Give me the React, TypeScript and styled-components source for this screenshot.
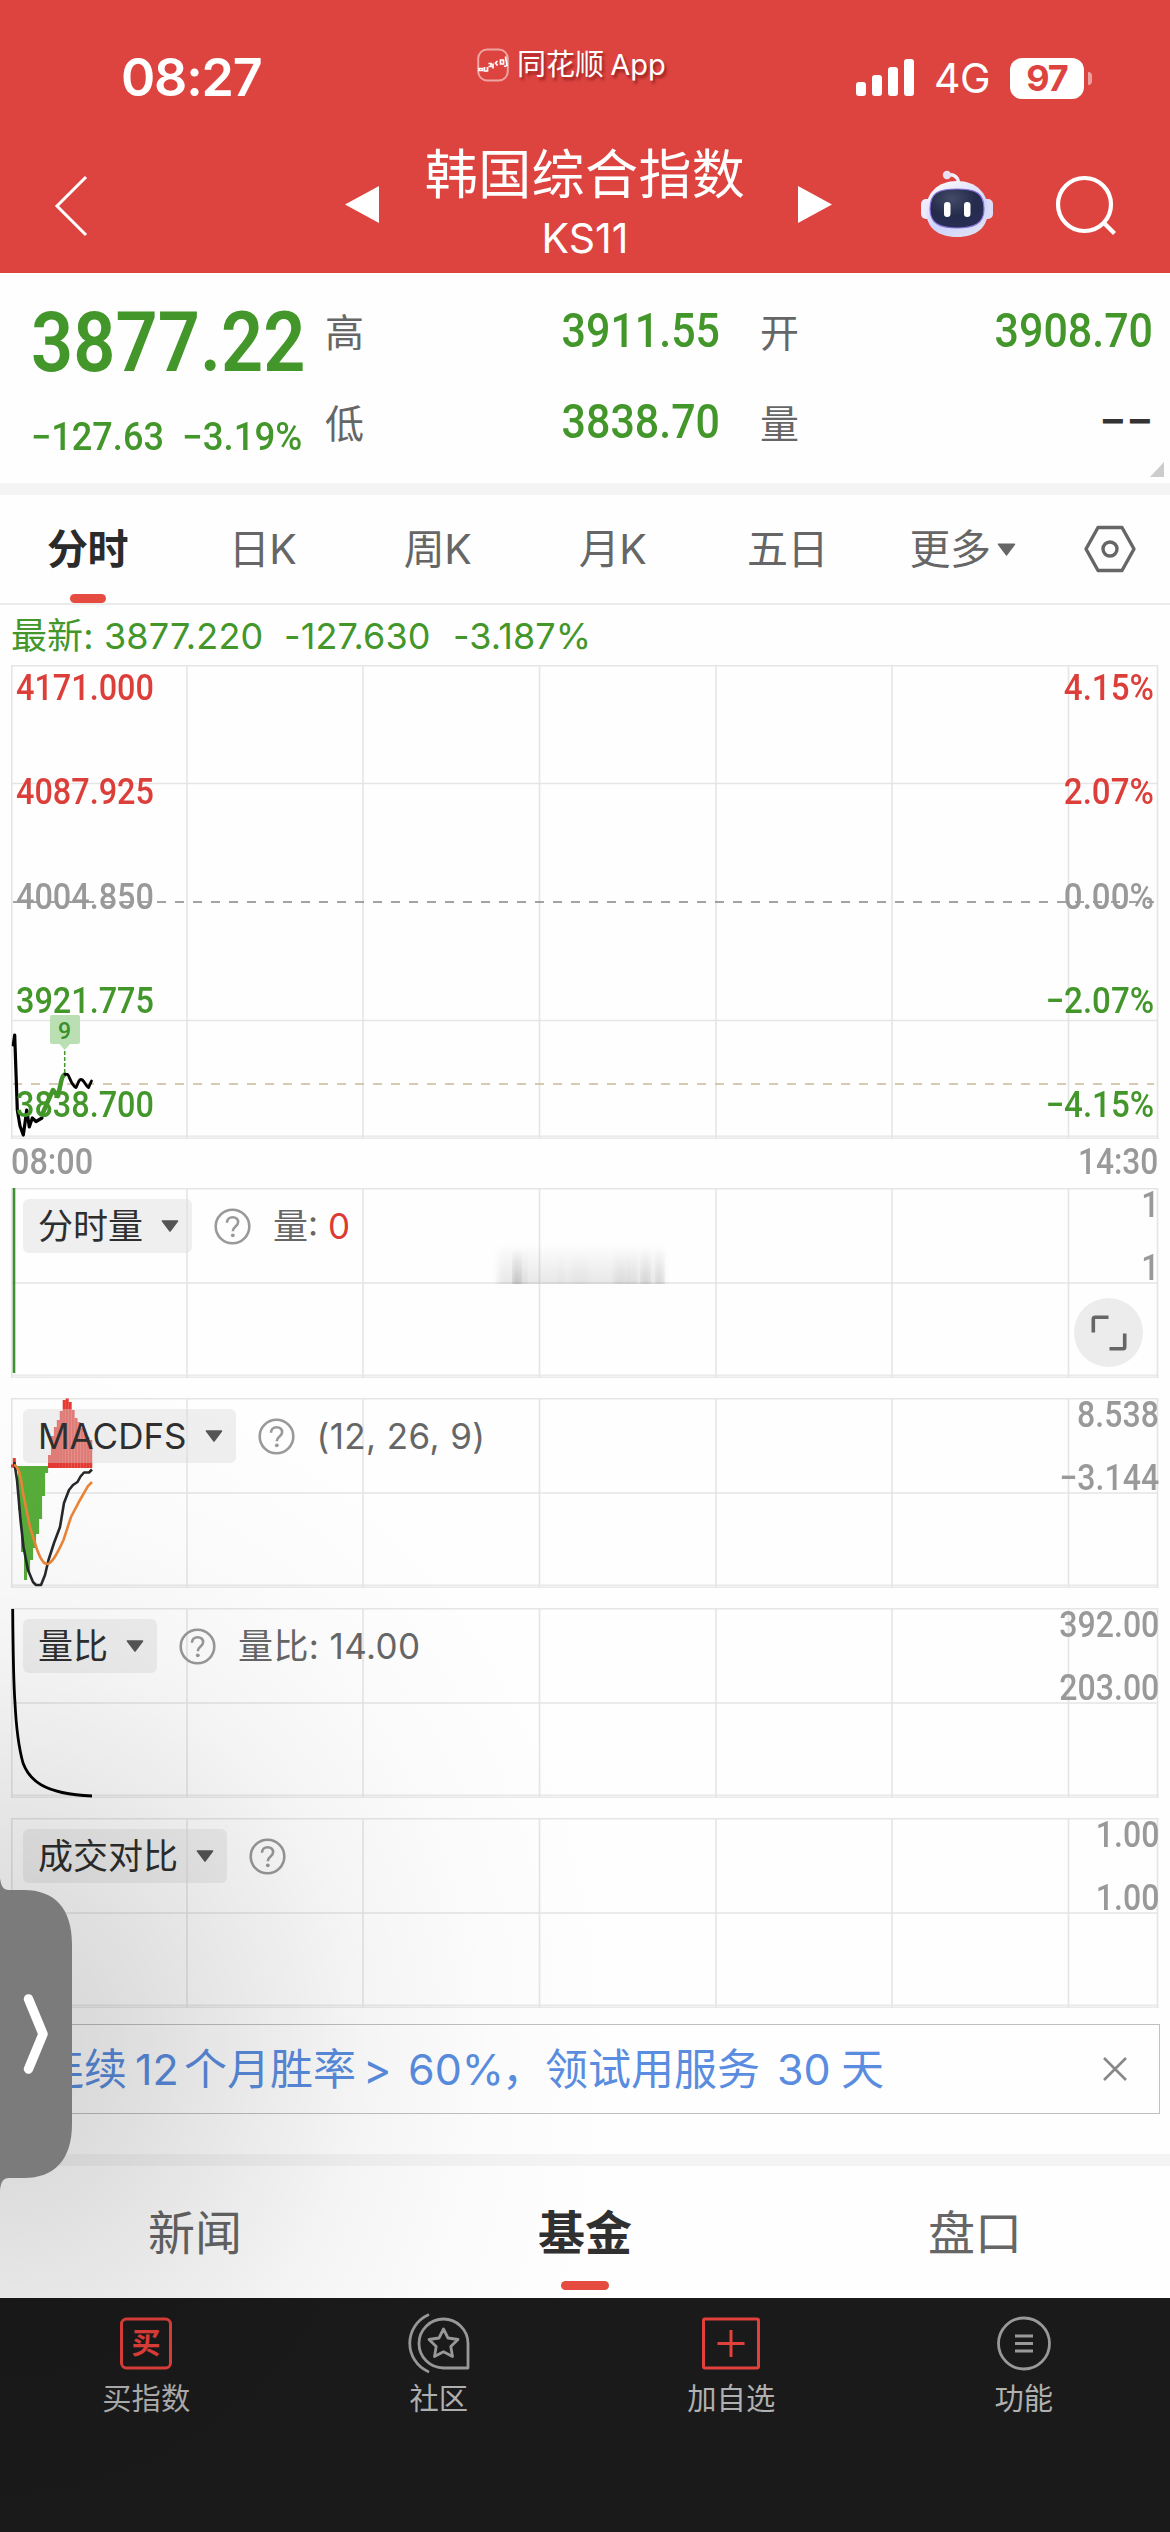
import React from 'react';
import styled, { createGlobalStyle } from 'styled-components';

const RED = '#dd4440';
const GREEN = '#43962a';
const GRID = '#e5e5e5';
const COLUMNS = [187, 363, 539.5, 716, 892, 1068.5];

const GlobalStyle = createGlobalStyle`
  * { box-sizing: border-box; }
  body {
    margin: 0;
    background: #fff;
    font-family: Inter, 'Noto Sans CJK SC', sans-serif;
  }
`;

const Page = styled.div`
  position: relative;
  width: 1170px;
  height: 2532px;
  display: flex;
  flex-direction: column;
  overflow: hidden;
  background: #fefefe;
  white-space: nowrap;
`;

const Num = styled.span<{ $size: number; $scale?: number; $origin?: string; $color?: string; $weight?: number }>`
  display: inline-block;
  font-family: Roboto, sans-serif;
  font-weight: ${(p) => p.$weight ?? 500};
  font-size: ${(p) => p.$size}px;
  color: ${(p) => p.$color ?? GREEN};
  transform: scaleX(${(p) => p.$scale ?? 1});
  transform-origin: ${(p) => p.$origin ?? 'left'} center;
`;

/* ---------- header ---------- */

const Header = styled.header`
  height: 273px;
  flex: none;
  background: ${RED};
  color: #fff;
`;

const StatusBar = styled.div`
  height: 136px;
  display: grid;
  grid-template-columns: 477px 379px 1fr;
`;

const Clock = styled.div`
  padding: 48px 0 0 121px;
  font-size: 52px;
  font-weight: 600;
  line-height: 60px;
  letter-spacing: -1.2px;
`;

const AppMark = styled.div`
  display: flex;
  align-items: center;
  gap: 8px;
  height: 36px;
  margin-top: 47px;
  font-size: 29px;
  line-height: 36px;
  word-spacing: -2px;
  text-shadow: 2px 3px 3px rgba(90, 0, 0, 0.55);
`;

const Signals = styled.div`
  display: flex;
  align-items: center;
  height: 42px;
  margin-top: 57px;
`;

const Network = styled.span`
  margin-left: 19px;
  width: 76px;
  font-size: 41px;
  line-height: 42px;
  letter-spacing: -0.5px;
`;

const Battery = styled.span`
  width: 74px;
  height: 41px;
  border-radius: 12px;
  background: #fff;
  color: ${RED};
  font-size: 36px;
  font-weight: 700;
  line-height: 41px;
  text-align: center;
  letter-spacing: -1px;
`;

const BatteryTip = styled.span`
  width: 4px;
  height: 13px;
  margin-left: 4px;
  border-radius: 0 5px 5px 0;
  background: #eca09e;
`;

const NavBar = styled.div`
  height: 137px;
  display: grid;
  grid-template-columns: 345px 34px 419px 34px 89px 72px 1fr;
  & > svg { display: block; }
`;

const TitleBlock = styled.div`
  padding-right: 7px;
  text-align: center;
`;

const Title = styled.div`
  margin-top: 9px;
  font-size: 53px;
  line-height: 60px;
  letter-spacing: 0.4px;
`;

const Ticker = styled.div`
  margin-top: 12px;
  font-size: 41px;
  line-height: 42px;
  letter-spacing: 0;
`;

/* ---------- quote ---------- */

const Quote = styled.section`
  position: relative;
  flex: none;
  height: 210px;
  display: flex;
  padding-left: 31px;
`;

const PriceBlock = styled.div`
  width: 294px;
  padding-top: 27px;
`;

const Price = styled.div`
  height: 84px;
  line-height: 86px;
`;

const Changes = styled.div`
  display: grid;
  grid-template-columns: 151px 1fr;
  margin-top: 33px;
  line-height: 41px;
`;

const Stats = styled.div`
  display: grid;
  grid-template-columns: 395px 393px;
  grid-auto-rows: 91px;
  column-gap: 40px;
  padding-top: 14px;
`;

const Stat = styled.div`
  display: flex;
  align-items: center;
  justify-content: space-between;
  font-size: 39px;
  color: #666;
  line-height: 90px;
  & > span { line-height: 86px; padding-bottom: 4px; }
`;

const Corner = styled.i`
  position: absolute;
  right: 6px;
  bottom: 6px;
  border-style: solid;
  border-width: 0 0 15px 14px;
  border-color: transparent transparent #ccc transparent;
`;

const Band = styled.div`
  height: 12px;
  flex: none;
  background: #f4f4f4;
`;

/* ---------- period tabs ---------- */

const PeriodTabs = styled.nav`
  flex: none;
  height: 110px;
  display: grid;
  grid-template-columns: repeat(6, 175px) 120px;
  border-bottom: 2px solid #ebebeb;
`;

const PeriodTab = styled.div<{ $active?: boolean }>`
  display: flex;
  align-items: center;
  justify-content: center;
  gap: 6px;
  position: relative;
  font-size: 41px;
  line-height: 108px;
  letter-spacing: -0.5px;
  color: ${(p) => (p.$active ? '#2b2b2b' : '#666')};
  font-weight: ${(p) => (p.$active ? 700 : 400)};
`;

const Indicator = styled.i<{ $width: number; $bottom: number }>`
  position: absolute;
  left: 50%;
  bottom: ${(p) => p.$bottom}px;
  width: ${(p) => p.$width}px;
  height: 9px;
  margin-left: ${(p) => -p.$width / 2}px;
  border-radius: 5px;
  background: #e64b40;
`;

const Latest = styled.div`
  flex: none;
  height: 60px;
  display: grid;
  grid-template-columns: 93px 180px 169px 1fr;
  padding-left: 11px;
  line-height: 62px;
  font-size: 36px;
  letter-spacing: 0.1px;
  color: ${GREEN};
`;

/* ---------- charts ---------- */

const ChartStack = styled.section`
  flex: none;
  height: 1359px;
`;

const Panel = styled.div<{ $height: number; $gap?: number }>`
  display: grid;
  height: ${(p) => p.$height}px;
  margin-bottom: ${(p) => p.$gap ?? 0}px;
  & > * { grid-area: 1 / 1; }
  & > svg { display: block; }
`;

const Scale = styled.div<{ $right?: boolean; $pad: number; $gap: number; $edge: number; $line: number }>`
  display: flex;
  flex-direction: column;
  justify-self: ${(p) => (p.$right ? 'end' : 'start')};
  align-items: ${(p) => (p.$right ? 'flex-end' : 'flex-start')};
  gap: ${(p) => p.$gap}px;
  padding: ${(p) => p.$pad}px ${(p) => p.$edge}px 0;
  line-height: ${(p) => p.$line}px;
`;

const TimeRow = styled.div`
  display: flex;
  justify-content: space-between;
  height: 49px;
  padding: 0 12px 0 11px;
  line-height: 47px;
`;

const Legend = styled.div`
  display: flex;
  align-items: center;
  align-self: start;
  justify-self: start;
  gap: 22px;
  height: 54px;
  margin: 11px 0 0 23px;
  font-size: 35px;
  line-height: 54px;
  color: #666;
`;

const Chip = styled.div`
  display: flex;
  align-items: center;
  gap: 18px;
  height: 54px;
  padding: 0 13px 0 15px;
  border-radius: 6px;
  background: rgba(220, 220, 220, 0.42);
  color: #2e2e2e;
`;

const Reading = styled.span`
  letter-spacing: 0.4px;
`;

const RedValue = styled.span`
  color: #dc3b35;
`;

const ExpandButton = styled.div`
  align-self: end;
  justify-self: end;
  display: grid;
  place-items: center;
  width: 69px;
  height: 69px;
  margin: 0 27px 11px 0;
  border-radius: 50%;
  background: #ececec;
`;

/* ---------- promotion and lower tabs ---------- */

const Promo = styled.div`
  flex: none;
  display: flex;
  align-items: center;
  justify-content: space-between;
  height: 90px;
  margin: 0 10px 40px 12px;
  padding: 0 32px 0 28px;
  border: 1px solid #c0c0c0;
  font-size: 43px;
  line-height: 88px;
  color: #5a8ddf;
`;

const PromoText = styled.span`
  display: flex;
`;

const Piece = styled.span<{ $width: number }>`
  width: ${(p) => p.$width}px;
`;

const SectionTabs = styled.nav`
  flex: none;
  height: 132px;
  display: grid;
  grid-template-columns: repeat(3, 1fr);
`;

const SectionTab = styled.div<{ $active?: boolean }>`
  position: relative;
  text-align: center;
  font-size: 47px;
  line-height: 133px;
  color: ${(p) => (p.$active ? '#303030' : '#666')};
  font-weight: ${(p) => (p.$active ? 700 : 400)};
`;

const Toolbar = styled.footer`
  flex: none;
  height: 234px;
  display: grid;
  grid-template-columns: repeat(4, 1fr);
  background: #1a1a1a;
`;

const Tool = styled.div`
  display: flex;
  flex-direction: column;
  align-items: center;
  padding-top: 15px;
  font-size: 29.3px;
  line-height: 40px;
  color: #b0b0b0;
  & > svg { margin-bottom: 2px; }
`;

const DrawerShade = styled.div`
  position: absolute;
  left: 0;
  top: 1330px;
  width: 640px;
  height: 1202px;
  pointer-events: none;
  background: radial-gradient(
    ellipse 620px 700px at 0 720px,
    rgba(0, 0, 0, 0.16) 0%,
    rgba(0, 0, 0, 0.135) 18%,
    rgba(0, 0, 0, 0.085) 38%,
    rgba(0, 0, 0, 0.035) 60%,
    rgba(0, 0, 0, 0.01) 80%,
    rgba(0, 0, 0, 0) 100%
  );
`;

const DrawerHandle = styled.div`
  position: absolute;
  left: 0;
  top: 1872px;
  width: 72px;
  height: 324px;
`;

/* ---------- drawings ---------- */

const DownTriangle = ({ w = 18, h = 12, color = '#555' }: { w?: number; h?: number; color?: string }) => (
  <svg width={w} height={h} viewBox="0 0 18 12">
    <path d="M1.5 1h15L9 11z" fill={color} stroke={color} strokeWidth="1.6" strokeLinejoin="round" />
  </svg>
);

const Help = () => (
  <svg width="37" height="37" viewBox="0 0 37 37" fill="none" stroke="#999">
    <circle cx="18.5" cy="18.5" r="16.8" strokeWidth="2.6" />
    <path d="M13 14.8c0-3.4 2.4-5.6 5.6-5.6s5.5 2 5.5 5c0 4.4-5.3 4.3-5.3 9" strokeWidth="2.6" />
    <circle cx="18.8" cy="27.3" r="1.9" fill="#999" stroke="none" />
  </svg>
);

const AppGlyph = () => (
  <svg width="32" height="34" viewBox="0 0 32 34" fill="none" stroke="#fff">
    <rect x="1.2" y="1.5" width="29.6" height="31" rx="9" stroke="#eea5a2" strokeWidth="2" />
    <path d="M2 20.5h3.5v2H2zM7.500 19v4h3v-4M11.500 15.500h2.500v3h-2.500M16 15.500v5M20.500 13l-2 2 2 2.500M23.500 12h3v4h-3zM28.500 8.500l1.500 9-3 1" strokeWidth="1.7" />
  </svg>
);

const SignalBars = () => (
  <svg width="59" height="42" viewBox="0 0 59 42" fill="#fff">
    <rect x="0" y="25" width="10" height="14" rx="3" />
    <rect x="16" y="18" width="10" height="21" rx="3" />
    <rect x="32" y="10" width="10" height="29" rx="3" />
    <rect x="48" y="2" width="10" height="37" rx="3" />
  </svg>
);

const Robot = () => (
  <svg width="72" height="137" viewBox="0 0 72 137">
    <defs>
      <linearGradient id="shell" x1="0.2" y1="0" x2="0.8" y2="1">
        <stop offset="0" stopColor="#fbfaff" />
        <stop offset="0.6" stopColor="#cfd3fb" />
        <stop offset="1" stopColor="#dfe4f6" />
      </linearGradient>
      <radialGradient id="visor" cx="0.4" cy="0.25" r="0.9">
        <stop offset="0" stopColor="#444b68" />
        <stop offset="0.5" stopColor="#242b4b" />
        <stop offset="1" stopColor="#2c2f5c" />
      </radialGradient>
    </defs>
    <path d="M26 39c6-1 11 1 11.500 8" fill="none" stroke="#f5eefb" strokeWidth="3.4" />
    <circle cx="26" cy="39" r="4.200" fill="#e9e0f4" />
    <rect x="0" y="63" width="12" height="20" rx="5" fill="#eeecfc" />
    <rect x="60" y="63" width="12" height="20" rx="5" fill="#dcdcf8" />
    <path d="M36 45c19 0 31 12 31 29 0 18-12 27-31 27S5 92 5 74c0-17 12-29 31-29z" fill="url(#shell)" />
    <path d="M36 53c19 0 27 4 27 20 0 14-9 19-27 19S9 87 9 73c0-16 8-20 27-20z" fill="url(#visor)" stroke="#8873d8" strokeWidth="1.200" />
    <rect x="23" y="66" width="6.500" height="15" rx="3.200" fill="#fff" />
    <rect x="43" y="66" width="6.500" height="15" rx="3.200" fill="#fff" />
  </svg>
);

const Grid = ({ height, rows }: { height: number; rows: number[] }) => (
  <g stroke={GRID} strokeWidth="1.6" fill="none">
    <path d={`M11 0.800H1158.500M11.800 0V${height}M1157.500 0V${height}`} />
    <path d={`M11 ${height - 0.800}H1158.500M11 ${height - 2.800}H1158.500`} strokeWidth="1.200" />
    {COLUMNS.map((x) => (
      <path key={x} d={`M${x} 0V${height}`} />
    ))}
    {rows.map((y) => (
      <path key={y} d={`M11 ${y}H1158`} />
    ))}
  </g>
);

const PriceChart = () => (
  <svg width="1170" height="474" viewBox="0 0 1170 474" fill="none">
    <Grid height={474} rows={[118.500, 355.500]} />
    <path d="M13 237H1154" stroke="#858585" strokeWidth="1.500" strokeDasharray="9 9" />
    <path d="M13 419H1154" stroke="#c9b99b" strokeWidth="1.500" strokeDasharray="9 9" />
    <path d="M13.300 380L14.700 370L16 408L17.300 445L20 461L23.300 470L25 458L26.700 445L29.300 462L32.300 453L36 456.500L42 453" stroke="#000" strokeWidth="3.200" strokeLinejoin="round" strokeLinecap="round" />
    <path d="M42 450L48 436L53 425L58 431L61.500 415C62.500 411 63.500 409.500 66 409.300" stroke={GREEN} strokeWidth="4.500" strokeLinejoin="round" />
    <path d="M65 409.300H67.500C69.500 411 71 420 76 422.600C78 419 78.500 414.500 81 414.500C84 414.500 85 420 88.500 422.600L91.500 416" stroke="#000" strokeWidth="2.800" strokeLinejoin="round" strokeLinecap="round" />
    <path d="M64.700 386V408" stroke={GREEN} strokeWidth="1.500" strokeDasharray="4 2" />
    <path d="M52 350H78a2 2 0 0 1 2 2V377a2 2 0 0 1-2 2H70L64.700 385L59.500 379H52a2 2 0 0 1-2-2V352a2 2 0 0 1 2-2z" fill="#b9dfb3" />
    <text x="64.500" y="374" fontFamily="Roboto" fontSize="23" fontWeight="500" fill="#398f2b" textAnchor="middle">9</text>
  </svg>
);

const smudges = [
  [513, 8, 0.42], [521, 6, 0.14], [558, 6, 0.06], [572, 16, 0.05], [614, 14, 0.13], [628, 9, 0.12], [641, 9, 0.22], [656, 8, 0.2],
];

const VolumeChart = () => (
  <svg width="1170" height="190" viewBox="0 0 1170 190">
    <defs>
      <linearGradient id="fade" x1="0" y1="0" x2="0" y2="1">
        <stop offset="0" stopColor="#777" stopOpacity="0" />
        <stop offset="1" stopColor="#777" stopOpacity="1" />
      </linearGradient>
      <filter id="soft"><feGaussianBlur stdDeviation="3 0.500" /></filter>
      <clipPath id="upper"><rect x="490" y="50" width="190" height="46" /></clipPath>
    </defs>
    <Grid height={190} rows={[95]} />
    <path d="M14 0V185" stroke="#3d9130" strokeWidth="2.600" />
    <g clipPath="url(#upper)">
      <rect x="498" y="56" width="166" height="40" fill="url(#fade)" opacity="0.17" filter="url(#soft)" />
      {smudges.map(([x, w, o]) => (
        <rect key={x} x={x} y="60" width={w} height="38" fill="url(#fade)" opacity={o} filter="url(#soft)" />
      ))}
    </g>
  </svg>
);

const fallBars = [14, 112, 154, 182, 174, 162, 150, 136, 121, 98, 75];
const riseBars = [57, 38, 29, 22, 13, 2, 0.5, 4, 12, 20, 24, 30, 36, 39, 42];

const MacdChart = () => (
  <svg width="1170" height="190" viewBox="0 0 1170 190" fill="none">
    <Grid height={190} rows={[95]} />
    {fallBars.map((bottom, i) => (
      <rect key={i} x={15 + i * 3} y="68" width="3.100" height={Math.max(2, bottom - 68)} fill="#57ad3a" />
    ))}
    {riseBars.map((top, i) => (
      <rect key={i} x={48 + i * 2.940} y={top} width="3.100" height={70 - top} fill="#e53a32" />
    ))}
    <path d="M11 68H15M14.300 60V70" stroke="#e53a32" strokeWidth="3" />
    <path d="M14.300 64L17 82L20.500 122L23.500 149L28 172L33 184L36 187H41L45 177L48.500 162L54 145L60 129L64 105L69 92L73 87L77.500 84L80.500 78.500L84 74.500H89L92 71.500" stroke="#26282c" strokeWidth="2.600" strokeLinejoin="round" />
    <path d="M14 67C20 69 21 82 23 95L30 129L35.500 147C40 161 44 166 47 166C52 166 58 154 63.500 142L71 119L80 102L88 88L92 84" stroke="#ec8536" strokeWidth="2.600" />
  </svg>
);

const RatioChart = () => (
  <svg width="1170" height="190" viewBox="0 0 1170 190" fill="none">
    <Grid height={190} rows={[95]} />
    <path d="M12.700 1C13 40 13.500 75 15 95C16 115 18 137 23 155C29 171 42 186 92 188" stroke="#000" strokeWidth="2.800" />
  </svg>
);

const CompareChart = () => (
  <svg width="1170" height="190" viewBox="0 0 1170 190" fill="none">
    <Grid height={190} rows={[95]} />
  </svg>
);

const SubScale = ({ values }: { values: string[] }) => (
  <Scale $right $pad={0} $gap={29} $edge={11} $line={34}>
    {values.map((v, i) => (
      <Num key={i} $size={36} $scale={0.89} $origin="right" $color="#999">{v}</Num>
    ))}
  </Scale>
);

const priceScale: [string, string, string][] = [
  ['4171.000', '4.15%', '#dc3f3a'],
  ['4087.925', '2.07%', '#dc3f3a'],
  ['4004.850', '0.00%', '#999'],
  ['3921.775', '−2.07%', GREEN],
  ['3838.700', '−4.15%', GREEN],
];

export default function App() {
  return (
    <Page>
      <GlobalStyle />
      <Header>
        <StatusBar>
          <Clock>08:27</Clock>
          <AppMark><AppGlyph />同花顺 App</AppMark>
          <Signals>
            <SignalBars />
            <Network>4G</Network>
            <Battery>97</Battery>
            <BatteryTip />
          </Signals>
        </StatusBar>
        <NavBar>
          <svg width="345" height="137" viewBox="0 0 345 137" fill="none">
            <path d="M86 41L57 70L86 99" stroke="#fff" strokeWidth="3" />
          </svg>
          <svg width="34" height="137" viewBox="0 0 34 137"><path d="M34 50V87L0 68.500z" fill="#fff" /></svg>
          <TitleBlock>
            <Title>韩国综合指数</Title>
            <Ticker>KS11</Ticker>
          </TitleBlock>
          <svg width="34" height="137" viewBox="0 0 34 137"><path d="M0 50V87L34 68.500z" fill="#fff" /></svg>
          <span />
          <Robot />
          <svg width="177" height="137" viewBox="0 0 177 137" fill="none" stroke="#fff" strokeWidth="4.200">
            <circle cx="91.500" cy="68.500" r="26.500" />
            <path d="M111 87L121.500 97.500" />
          </svg>
        </NavBar>
      </Header>

      <Quote>
        <PriceBlock>
          <Price><Num $size={84} $scale={0.88} $weight={600}>3877.22</Num></Price>
          <Changes>
            <Num $size={38} $scale={0.95}>−127.63</Num>
            <Num $size={38} $scale={0.965}>−3.19%</Num>
          </Changes>
        </PriceBlock>
        <Stats>
          <Stat>高<Num $size={48} $scale={0.895} $origin="right">3911.55</Num></Stat>
          <Stat>开<Num $size={48} $scale={0.895} $origin="right">3908.70</Num></Stat>
          <Stat>低<Num $size={48} $scale={0.895} $origin="right">3838.70</Num></Stat>
          <Stat>量<Num $size={48} $scale={1} $origin="right" $color="#333">−−</Num></Stat>
        </Stats>
        <Corner />
      </Quote>
      <Band />

      <PeriodTabs>
        <PeriodTab $active>分时<Indicator $width={36} $bottom={0} /></PeriodTab>
        <PeriodTab>日K</PeriodTab>
        <PeriodTab>周K</PeriodTab>
        <PeriodTab>月K</PeriodTab>
        <PeriodTab>五日</PeriodTab>
        <PeriodTab>更多<DownTriangle w={19} h={13} color="#666" /></PeriodTab>
        <PeriodTab>
          <svg width="54" height="50" viewBox="0 0 54 50" fill="none" stroke="#666" strokeWidth="3.400">
            <path d="M15 3.500H39L51 25L39 46.500H15L3 25z" strokeLinejoin="round" />
            <circle cx="27" cy="25" r="7" />
          </svg>
        </PeriodTab>
      </PeriodTabs>

      <Latest>
        <span>最新:</span><span>3877.220</span><span>-127.630</span><span>-3.187%</span>
      </Latest>

      <ChartStack>
        <Panel $height={474}>
          <PriceChart />
          <Scale $pad={3} $gap={64.3} $edge={16} $line={40}>
            {priceScale.map(([v, , c]) => <Num key={v} $size={36} $scale={0.9} $color={c}>{v}</Num>)}
          </Scale>
          <Scale $right $pad={3} $gap={64.3} $edge={16} $line={40}>
            {priceScale.map(([, v, c]) => <Num key={v} $size={36} $scale={0.92} $origin="right" $color={c}>{v}</Num>)}
          </Scale>
        </Panel>
        <TimeRow>
          <Num $size={36} $scale={0.9} $color="#999">08:00</Num>
          <Num $size={36} $scale={0.88} $origin="right" $color="#999">14:30</Num>
        </TimeRow>

        <Panel $height={190} $gap={20}>
          <VolumeChart />
          <Legend>
            <Chip>分时量<DownTriangle /></Chip>
            <Help />
            <span>量: <RedValue>0</RedValue></span>
          </Legend>
          <SubScale values={['1', '1']} />
          <ExpandButton>
            <svg width="36" height="36" viewBox="0 0 36 36" fill="none" stroke="#666" strokeWidth="3.600">
              <path d="M2.300 17.500V4Q2.300 2.300 4 2.300H17.500M18.500 33.700H32Q33.700 33.700 33.700 32V18.500" />
            </svg>
          </ExpandButton>
        </Panel>

        <Panel $height={190} $gap={20}>
          <MacdChart />
          <Legend>
            <Chip>MACDFS<DownTriangle /></Chip>
            <Help />
            <Reading>(12, 26, 9)</Reading>
          </Legend>
          <SubScale values={['8.538', '−3.144']} />
        </Panel>

        <Panel $height={190} $gap={20}>
          <RatioChart />
          <Legend>
            <Chip>量比<DownTriangle /></Chip>
            <Help />
            <Reading>量比: 14.00</Reading>
          </Legend>
          <SubScale values={['392.00', '203.00']} />
        </Panel>

        <Panel $height={190}>
          <CompareChart />
          <Legend>
            <Chip>成交对比<DownTriangle /></Chip>
            <Help />
          </Legend>
          <SubScale values={['1.00', '1.00']} />
        </Panel>
      </ChartStack>

      <Promo>
        <PromoText>
          <Piece $width={94}>连续</Piece>
          <Piece $width={49}>12</Piece>
          <Piece $width={179}>个月胜率</Piece>
          <Piece $width={45}>&gt;</Piece>
          <Piece $width={94}>60%</Piece>
          <Piece $width={43}>，</Piece>
          <Piece $width={232}>领试用服务</Piece>
          <Piece $width={64}>30</Piece>
          <span>天</span>
        </PromoText>
        <svg width="24" height="24" viewBox="0 0 24 24" stroke="#888" strokeWidth="2.600">
          <path d="M1 1L23 23M23 1L1 23" />
        </svg>
      </Promo>
      <Band />

      <SectionTabs>
        <SectionTab>新闻</SectionTab>
        <SectionTab $active>基金<Indicator $width={48} $bottom={9} /></SectionTab>
        <SectionTab>盘口</SectionTab>
      </SectionTabs>

      <Toolbar>
        <Tool>
          <svg width="64" height="64" viewBox="0 0 64 64" fill="none">
            <rect x="7.500" y="6" width="49" height="49" rx="5" stroke="#e2403a" strokeWidth="3" />
            <text x="32" y="41" fontSize="29" fontWeight="700" textAnchor="middle" fill="#e2403a" fontFamily="Noto Sans CJK SC">买</text>
          </svg>
          买指数
        </Tool>
        <Tool>
          <svg width="64" height="64" viewBox="0 0 64 64" fill="none" stroke="#999" strokeWidth="2.800">
            <path d="M21 2A31 31 0 0 0 21 58.500" strokeLinecap="round" />
            <path d="M36.500 6a24.500 24.500 0 1 0 0 49H61V30.500A24.500 24.500 0 0 0 36.500 6z" strokeLinejoin="round" />
            <path d="M36.500 16L41 25L51 26.500L43.800 33.500L45.500 43.500L36.500 38.800L27.500 43.500L29.200 33.500L22 26.500L32 25z" strokeLinejoin="round" />
          </svg>
          社区
        </Tool>
        <Tool>
          <svg width="64" height="64" viewBox="0 0 64 64" fill="none" stroke="#e2403a" strokeWidth="3">
            <rect x="4.500" y="6" width="55" height="49" rx="1.500" />
            <path d="M32 17V44M18.500 30.500H45.500" />
          </svg>
          加自选
        </Tool>
        <Tool>
          <svg width="64" height="64" viewBox="0 0 64 64" fill="none" stroke="#999" strokeWidth="2.800">
            <circle cx="32" cy="30.500" r="25.500" />
            <path d="M23 23H41M23 30.500H41M23 38H41" />
          </svg>
          功能
        </Tool>
      </Toolbar>

      <DrawerShade />
      <DrawerHandle>
        <svg width="72" height="324" viewBox="0 0 72 324" fill="none">
          <path d="M0 6C1 14 3 18 9 18H24C54 18 72 36 72 72V252C72 288 54 306 24 306H9C3 306 1 310 0 318z" fill="#7b7b7b" />
          <path d="M28.500 127L43 162L28.500 197" stroke="#fff" strokeWidth="9.500" strokeLinecap="round" strokeLinejoin="round" />
        </svg>
      </DrawerHandle>
    </Page>
  );
}
